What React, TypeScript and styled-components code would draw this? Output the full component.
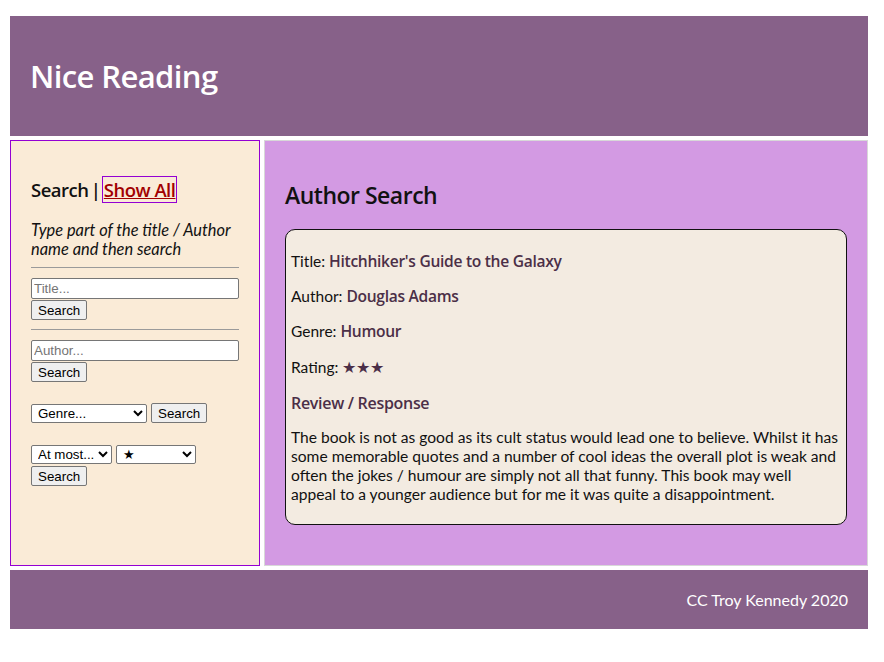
import React from "react";
import styled, { createGlobalStyle } from "styled-components";

const Global = createGlobalStyle`
  html, body { margin: 0; padding: 0; background: #ffffff; }
  body { font-family: Lato, "Liberation Sans", sans-serif; color: #111; }
`;

const Page = styled.div`
  display: grid;
  grid-template-rows: 120px 426px 59px;
  row-gap: 4px;
  padding: 16px 16px 0 10px;
`;

const Header = styled.header`
  background: #876189;
  display: flex;
  align-items: center;
  padding: 0 20px;
`;

const Brand = styled.h1`
  margin: 0;
  color: #ffffff;
  font-family: "Open Sans", sans-serif;
  font-weight: 600;
  font-size: 31px;
  letter-spacing: -0.6px;
`;

const Body = styled.div`
  display: grid;
  grid-template-columns: 250px 1fr;
  column-gap: 4px;
`;

const Sidebar = styled.aside`
  background: #faebd7;
  border: 1px solid #9400d3;
  padding: 20px;
`;

const SideHeading = styled.h3`
  margin: 17px 0 18px;
  font-family: "Open Sans", sans-serif;
  font-weight: 600;
  font-size: 18.5px;
  letter-spacing: -0.5px;
  word-spacing: -2px;
  line-height: 24px;
  color: #111;
`;

const ShowAll = styled.a`
  color: #a10000;
  text-decoration: underline;
  outline: 1px solid #9400d3;
  padding: 0 1px;
  word-spacing: normal;
`;

const Hint = styled.p`
  margin: 0 0 2px;
  font-style: italic;
  font-size: 16.4px;
  line-height: 19px;
  color: #111;
`;

const Rule = styled.hr`
  margin: 9px 0 10px;
  border: none;
  border-top: 1px solid #9a9a9a;
  height: 0;
`;

const Field = styled.div<{ $gap?: number }>`
  display: flex;
  flex-direction: column;
  align-items: flex-start;
  gap: 1px;
  margin-bottom: ${(p) => p.$gap ?? 0}px;
`;

const Row = styled.div`
  display: flex;
  align-items: center;
  gap: 4px;
  margin-bottom: 1px;
`;

const TextInput = styled.input`
  box-sizing: border-box;
  width: 208px;
  height: 21px;
  padding: 1px 2px;
  font-family: Arial, "Liberation Sans", sans-serif;
  font-size: 13.33px;
  border: 1px solid #767676;
  border-radius: 2px;
  background: #fff;
  &::placeholder { color: #757575; }
`;

const Button = styled.button`
  box-sizing: border-box;
  height: 20px;
  padding: 1px 6px;
  font-family: Arial, "Liberation Sans", sans-serif;
  font-size: 13.33px;
  color: #000;
  background: #efefef;
  border: 1px solid #767676;
  border-radius: 2px;
`;

const Select = styled.select<{ $w: number }>`
  box-sizing: border-box;
  width: ${(p) => p.$w}px;
  height: 19px;
  font-family: Arial, "Liberation Sans", sans-serif;
  font-size: 13.33px;
  color: #000;
  background: #fff;
  border: 1px solid #767676;
  border-radius: 2px;
  padding: 0 0 0 2px;
`;

const Main = styled.main`
  background: #d39ae3;
  border: 1px solid #d8d8d8;
  padding: 20px;
`;

const MainHeading = styled.h2`
  margin: 20px 0 20px;
  font-family: "Open Sans", sans-serif;
  font-weight: 600;
  font-size: 23px;
  letter-spacing: -0.5px;
  line-height: 28px;
  color: #111;
`;

const Card = styled.section`
  background: #f3ebe1;
  border: 1px solid #111;
  border-radius: 10px;
  padding: 6px 7px 5px 5px;
`;

const Line = styled.p`
  margin: 16px 0;
  font-size: 15.5px;
  line-height: 19px;
  color: #111;
`;

const Value = styled.span`
  font-family: "Open Sans", sans-serif;
  font-weight: 600;
  font-size: 15.6px;
  letter-spacing: -0.3px;
  color: #4b2f47;
`;

const Stars = styled.span`
  color: #4b2f47;
  font-size: 16px;
`;

const ReviewTitle = styled.h4`
  margin: 16px 0 15px;
  font-family: "Open Sans", sans-serif;
  font-weight: 600;
  font-size: 16px;
  letter-spacing: -0.3px;
  line-height: 20px;
  color: #4b2f47;
`;

const Review = styled.p`
  margin: 15px 0 15px;
  font-size: 15.6px;
  line-height: 19px;
  color: #111;
`;

const Footer = styled.footer`
  background: #876189;
  display: flex;
  align-items: center;
  justify-content: flex-end;
  padding: 0 20px;
  color: #fff;
  font-size: 16px;
`;

export default function App() {
  return (
    <>
      <Global />
      <Page>
        <Header>
          <Brand>Nice Reading</Brand>
        </Header>
        <Body>
          <Sidebar>
            <SideHeading>
              Search | <ShowAll href="#">Show All</ShowAll>
            </SideHeading>
            <Hint>Type part of the title / Author name and then search</Hint>
            <Rule />
            <Field>
              <TextInput placeholder="Title..." />
              <Button>Search</Button>
            </Field>
            <Rule />
            <Field $gap={21}>
              <TextInput placeholder="Author..." />
              <Button>Search</Button>
            </Field>
            <Field $gap={21}>
              <Row>
                <Select $w={116} defaultValue="g">
                  <option value="g">Genre...</option>
                  <option>Humour</option>
                </Select>
                <Button>Search</Button>
              </Row>
            </Field>
            <Field>
              <Row>
                <Select $w={81} defaultValue="a">
                  <option value="a">At most...</option>
                  <option>At least...</option>
                </Select>
                <Select $w={80} defaultValue="1">
                  <option value="1">★</option>
                  <option>★★</option>
                </Select>
              </Row>
              <Button>Search</Button>
            </Field>
          </Sidebar>
          <Main>
            <MainHeading>Author Search</MainHeading>
            <Card>
              <Line>
                Title: <Value>Hitchhiker's Guide to the Galaxy</Value>
              </Line>
              <Line>
                Author: <Value>Douglas Adams</Value>
              </Line>
              <Line>
                Genre: <Value>Humour</Value>
              </Line>
              <Line>
                Rating: <Stars>★★★</Stars>
              </Line>
              <ReviewTitle>Review / Response</ReviewTitle>
              <Review>
                The book is not as good as its cult status would lead one to believe. Whilst it has
                some memorable quotes and a number of cool ideas the overall plot is weak and often
                the jokes / humour are simply not all that funny. This book may well appeal to a
                younger audience but for me it was quite a disappointment.
              </Review>
            </Card>
          </Main>
        </Body>
        <Footer>CC Troy Kennedy 2020</Footer>
      </Page>
    </>
  );
}
